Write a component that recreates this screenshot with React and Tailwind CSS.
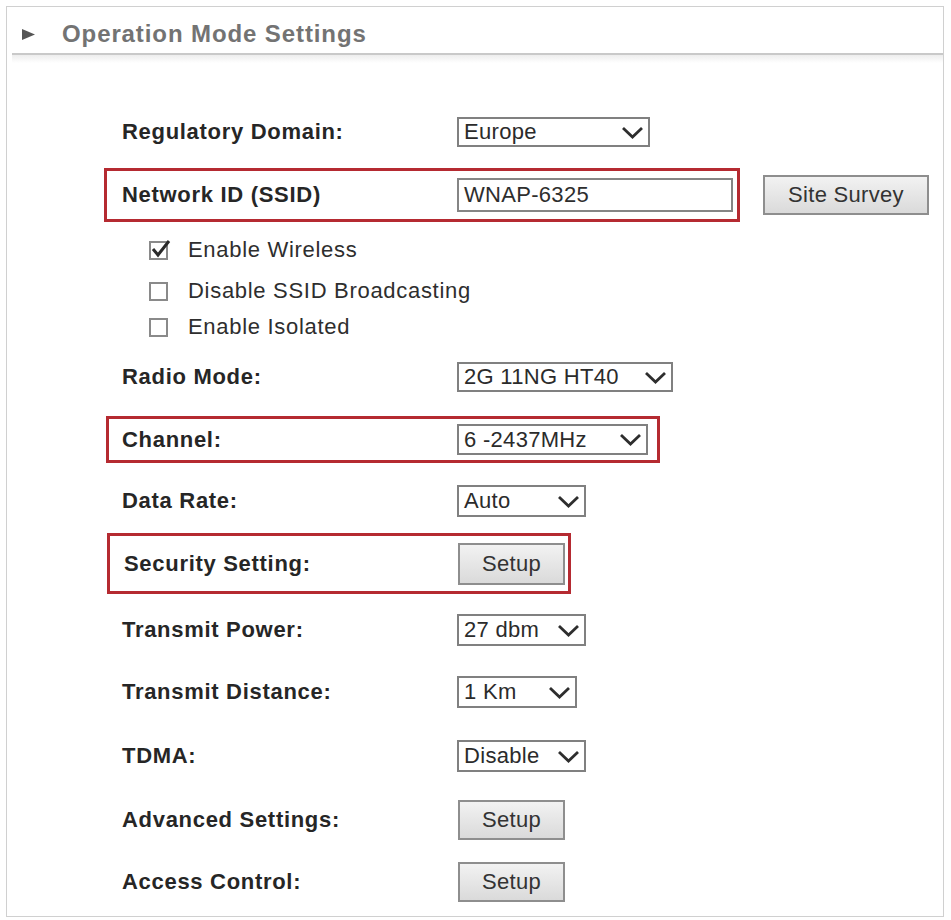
import React from "react";

const font = { fontFamily: '"Liberation Sans", Arial, sans-serif' };

function Chevron() {
  return (
    <svg width="23" height="13" viewBox="0 0 23 13" className="shrink-0">
      <path d="M2 2 L11.5 11 L21 2" stroke="#2e2e2e" strokeWidth="2.8" fill="none" />
    </svg>
  );
}

function Select({ value, w, h = "h-[30px]" }) {
  return (
    <div className={`flex items-center justify-between border-2 border-[#808080] bg-white pl-[5px] pr-[4px] ${w} ${h}`}>
      <span className="text-[22px] leading-none text-[#2b2b2b] tracking-[0.3px] whitespace-nowrap">{value}</span>
      <Chevron />
    </div>
  );
}

function Btn({ children, w = "w-[107px]", h = "h-[42px]" }) {
  return (
    <div className={`flex items-center justify-center border-2 border-[#8e8e8e] bg-gradient-to-b from-[#f2f2f2] to-[#dadada] text-[22px] leading-none text-[#333] tracking-[0.3px] ${w} ${h}`}>
      {children}
    </div>
  );
}

function Label({ children, w = "w-[335px]" }) {
  return (
    <div className={`${w} shrink-0 text-[22px] font-bold leading-none text-[#262626] tracking-[0.7px] whitespace-nowrap`}>
      {children}
    </div>
  );
}

function Check({ checked, label, mt }) {
  return (
    <div className={`flex items-center h-[36px] ml-[142px] ${mt}`}>
      <div className="relative w-[19px] h-[19px] border-2 border-[#8a8a8a] bg-white">
        {checked && (
          <svg width="22" height="20" viewBox="0 0 22 20" className="absolute left-[-1px] top-[-4px]">
            <path d="M3 10 L8 16 L19 2" stroke="#2a2a2a" strokeWidth="3" fill="none" />
          </svg>
        )}
      </div>
      <span className="ml-[20px] text-[22px] leading-none text-[#2e2e2e] tracking-[0.7px] whitespace-nowrap">{label}</span>
    </div>
  );
}

function Row({ label, children, mt, h = "h-[36px]" }) {
  return (
    <div className={`flex items-center ml-[115px] ${h} ${mt}`}>
      <Label>{label}</Label>
      {children}
    </div>
  );
}

export default function App() {
  return (
    <div className="w-[951px] h-[920px] bg-white pt-[6px] pl-[6px]" style={font}>
      <div className="w-[938px] h-[911px] border border-[#d0d0d0]">
        <div className="ml-[5px] h-[48px] pt-[8px] border-b-2 border-[#c9c9c9] flex items-center">
          <svg width="13" height="11" viewBox="0 0 13 11" className="ml-[10px]">
            <polygon points="0,0 13,5.5 0,11" fill="#555" />
          </svg>
          <span className="ml-[27px] text-[24px] font-bold text-[#737373] tracking-[0.9px] leading-none">
            Operation Mode Settings
          </span>
        </div>
        <div className="ml-[5px] h-[8px] bg-gradient-to-b from-[#ededed] to-white" />

        {/* Regulatory Domain */}
        <Row label="Regulatory Domain:" mt="mt-[51px]">
          <Select value="Europe" w="w-[193px]" />
        </Row>

        {/* Network ID */}
        <div className="flex items-center mt-[18px]">
          <div className="flex items-center ml-[97px] w-[636px] h-[54px] border-[3px] border-[#b52a31] pl-[15px]">
            <Label>Network ID (SSID)</Label>
            <div className="w-[276px] h-[34px] border-2 border-[#858585] bg-white flex items-center pl-[5px]">
              <span className="text-[22px] leading-none text-[#2e2e2e] tracking-[0.3px]">WNAP-6325</span>
            </div>
          </div>
          <div className="ml-[23px]">
            <Btn w="w-[166px]" h="h-[40px]">Site Survey</Btn>
          </div>
        </div>

        <Check checked label="Enable Wireless" mt="mt-[10px]" />
        <Check label="Disable SSID Broadcasting" mt="mt-[5px]" />
        <Check label="Enable Isolated" mt="mt-0" />

        <Row label="Radio Mode:" mt="mt-[14px]">
          <Select value="2G 11NG HT40" w="w-[216px]" />
        </Row>

        {/* Channel */}
        <div className="flex items-center ml-[99px] mt-[21px] w-[554px] h-[47px] border-[3px] border-[#b52a31] pl-[13px]">
          <Label>Channel:</Label>
          <Select value="6 -2437MHz" w="w-[191px]" h="h-[31px]" />
        </div>

        <Row label="Data Rate:" mt="mt-[20px]">
          <Select value="Auto" w="w-[129px]" h="h-[32px]" />
        </Row>

        {/* Security */}
        <div className="flex items-center ml-[100px] mt-[14px] w-[464px] h-[61px] border-[3px] border-[#b52a31] pl-[14px]">
          <Label w="w-[334px]">Security Setting:</Label>
          <Btn>Setup</Btn>
        </div>

        <Row label="Transmit Power:" mt="mt-[18px]">
          <Select value="27 dbm" w="w-[129px]" h="h-[32px]" />
        </Row>
        <Row label="Transmit Distance:" mt="mt-[26px]">
          <Select value="1 Km" w="w-[120px]" h="h-[32px]" />
        </Row>
        <Row label="TDMA:" mt="mt-[28px]">
          <Select value="Disable" w="w-[129px]" h="h-[32px]" />
        </Row>
        <Row label="Advanced Settings:" mt="mt-[26px]" h="h-[40px]">
          <div className="ml-[1px]"><Btn h="h-[40px]">Setup</Btn></div>
        </Row>
        <Row label="Access Control:" mt="mt-[22px]" h="h-[40px]">
          <div className="ml-[1px]"><Btn h="h-[40px]">Setup</Btn></div>
        </Row>
      </div>
    </div>
  );
}
